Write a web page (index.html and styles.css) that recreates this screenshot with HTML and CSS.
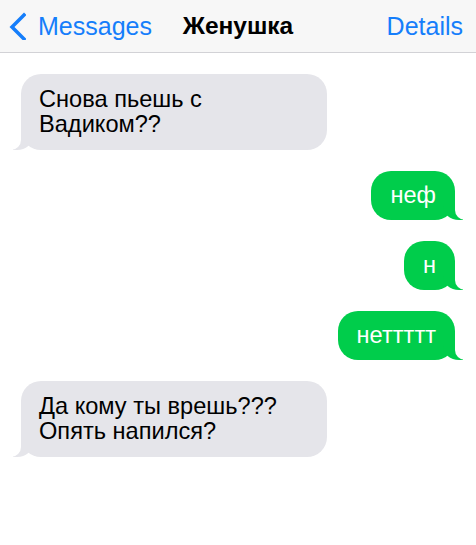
FILE: index.html
```html
<!DOCTYPE html>
<html lang="ru">
<head>
    <meta charset="UTF-8">
    <meta name="viewport" content="width=device-width, initial-scale=1.0">
    <title>Женушка</title>
    <link rel="stylesheet" href="styles.css">
</head>
<body>
    <header class="nav-bar">
        <a class="nav-back" href="#">
            <svg class="chevron" width="18" height="28" viewBox="0 0 18 28">
                <path d="M16 3 L4 15 L16 27" fill="none" stroke="#157efb" stroke-width="3.5" stroke-linecap="square"/>
            </svg>
            <span>Messages</span>
        </a>
        <h1 class="nav-title">Женушка</h1>
        <a class="nav-details" href="#">Details</a>
    </header>

    <main class="thread">
        <div class="message them">Снова пьешь с Вадиком??</div>
        <div class="message me">неф</div>
        <div class="message me">н</div>
        <div class="message me">неттттт</div>
        <div class="message them">Да кому ты врешь??? Опять напился?</div>
    </main>
</body>
</html>
```

FILE: styles.css
```css
body {
    margin: 0;
    font-family: 'Liberation Sans', Arial, sans-serif;
    background: #fff;
    color: #000;
}

.nav-bar {
    display: grid;
    grid-template-columns: 1fr auto 1fr;
    align-items: center;
    height: 52px;
    background: #f7f7f7;
    border-bottom: 1px solid #d2d2d6;
    font-size: 25px;
}
.nav-back {
    display: flex;
    align-items: center;
    gap: 12px;
    padding-left: 8px;
    color: #157efb;
    text-decoration: none;
}
.chevron {
    display: block;
}
.nav-title {
    margin: 0;
    font-size: 24.5px;
    font-weight: bold;
}
.nav-details {
    justify-self: end;
    padding-right: 13px;
    color: #157efb;
    text-decoration: none;
}

.thread {
    display: flex;
    flex-direction: column;
    gap: 21px;
    padding: 21px 21px;
}
.message {
    position: relative;
    font-size: 23.6px;
    line-height: 25px;
    border-radius: 20px;
}
.them {
    align-self: flex-start;
    box-sizing: border-box;
    width: 306px;
    padding: 13px 24px 13px 18px;
    background: #e5e5ea;
}
.me {
    align-self: flex-end;
    padding: 12px 19px;
    background: #00cd4b;
    color: #fff;
}

/* хвостики пузырей */
.message::before,
.message::after {
    content: "";
    position: absolute;
    bottom: 0;
    height: 25px;
}
.them::before {
    left: -8px;
    width: 20px;
    background: #e5e5ea;
    border-bottom-right-radius: 16px 14px;
}
.them::after {
    left: -26px;
    width: 26px;
    background: #fff;
    border-bottom-right-radius: 10px;
}
.me::before {
    right: -8px;
    width: 20px;
    background: #00cd4b;
    border-bottom-left-radius: 16px 14px;
}
.me::after {
    right: -26px;
    width: 26px;
    background: #fff;
    border-bottom-left-radius: 10px;
}
```
